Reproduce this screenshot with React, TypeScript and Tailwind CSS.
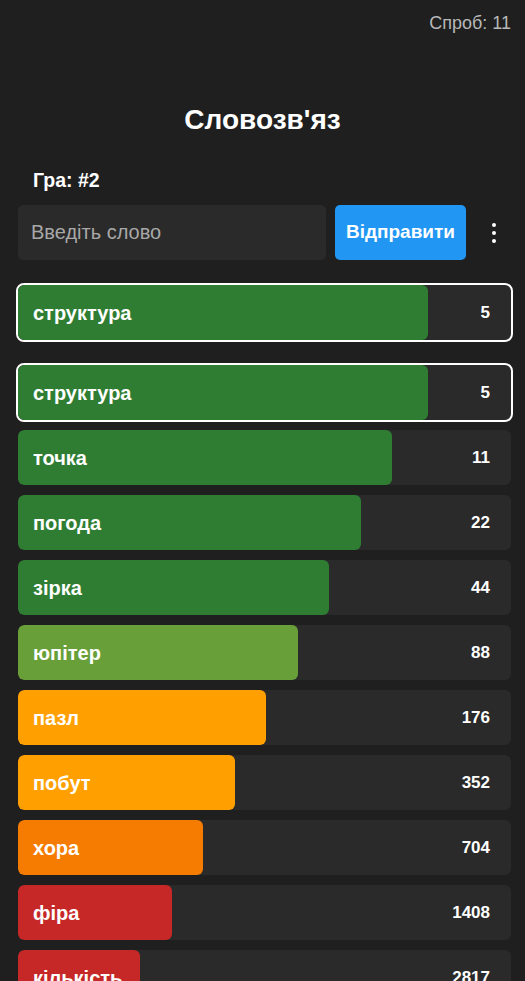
import { useState } from "react"

type Guess = { word: string; rank: number; width: number; color: string }

const guesses: Guess[] = [
  { word: "структура", rank: 5, width: 410, color: "bg-[#2e7d32]" },
  { word: "точка", rank: 11, width: 374, color: "bg-[#2e7d32]" },
  { word: "погода", rank: 22, width: 343, color: "bg-[#2e7d32]" },
  { word: "зірка", rank: 44, width: 311, color: "bg-[#2e7d32]" },
  { word: "юпітер", rank: 88, width: 280, color: "bg-[#689f38]" },
  { word: "пазл", rank: 176, width: 248, color: "bg-[#ffa000]" },
  { word: "побут", rank: 352, width: 217, color: "bg-[#ffa000]" },
  { word: "хора", rank: 704, width: 185, color: "bg-[#f57c00]" },
  { word: "фіра", rank: 1408, width: 154, color: "bg-[#c62828]" },
  { word: "кількість", rank: 2817, width: 122, color: "bg-[#c62828]" },
]

function GuessRow({ guess, active }: { guess: Guess; active?: boolean }) {
  return (
    <div
      className={`relative h-[55px] rounded-[6px] bg-[#2a2a2a] overflow-hidden ${
        active ? "outline-2 outline-white outline-offset-0" : ""
      }`}
    >
      <div
        className={`absolute left-0 top-0 bottom-0 rounded-[6px] ${guess.color}`}
        style={{ width: guess.width }}
      />
      <div className="relative flex h-full items-center justify-between pl-[15px] pr-[21px] font-bold text-white">
        <span className="text-[20px]">{guess.word}</span>
        <span className="text-[17px]">{guess.rank}</span>
      </div>
    </div>
  )
}

export default function App() {
  const [word, setWord] = useState("")

  return (
    <div className="min-h-screen bg-[#1f1f1f] text-white [font-family:'Liberation_Sans',Arial,sans-serif]">
      <div className="pt-[12px] pr-[14px] text-right text-[18px] leading-[22px] text-[#b8b8b8]">Спроб: 11</div>

      <h1 className="mt-[69px] text-center text-[28px] font-bold leading-[34px]">Словозв'яз</h1>

      <div className="pl-[18px] pr-[14px]">
        <div className="mt-[32px] pl-[15px] text-[19.5px] font-bold leading-[22px]">Гра: #2</div>

        <div className="mt-[14px] flex items-center gap-[9px]">
          <input
            value={word}
            onChange={(e) => setWord(e.target.value)}
            placeholder="Введіть слово"
            className="h-[55px] w-[308px] rounded-[5px] bg-[#2a2a2a] px-[13px] text-[20px] text-white placeholder-[#a8a8a8] outline-none"
          />
          <button className="h-[55px] w-[131px] rounded-[5px] bg-[#2196f3] text-[19px] font-bold text-white">
            Відправити
          </button>
          <button className="flex h-[55px] flex-1 flex-col items-center justify-center gap-[4px] pl-[2px]">
            <span className="h-[4px] w-[4px] rounded-full bg-white" />
            <span className="h-[4px] w-[4px] rounded-full bg-white" />
            <span className="h-[4px] w-[4px] rounded-full bg-white" />
          </button>
        </div>

        <div className="mt-[25px]">
          <GuessRow guess={guesses[0]} active />
        </div>

        <div className="mt-[25px] flex flex-col gap-[10px] pb-[20px]">
          {guesses.map((g, i) => (
            <GuessRow key={g.word} guess={g} active={i === 0} />
          ))}
        </div>
      </div>
    </div>
  )
}
